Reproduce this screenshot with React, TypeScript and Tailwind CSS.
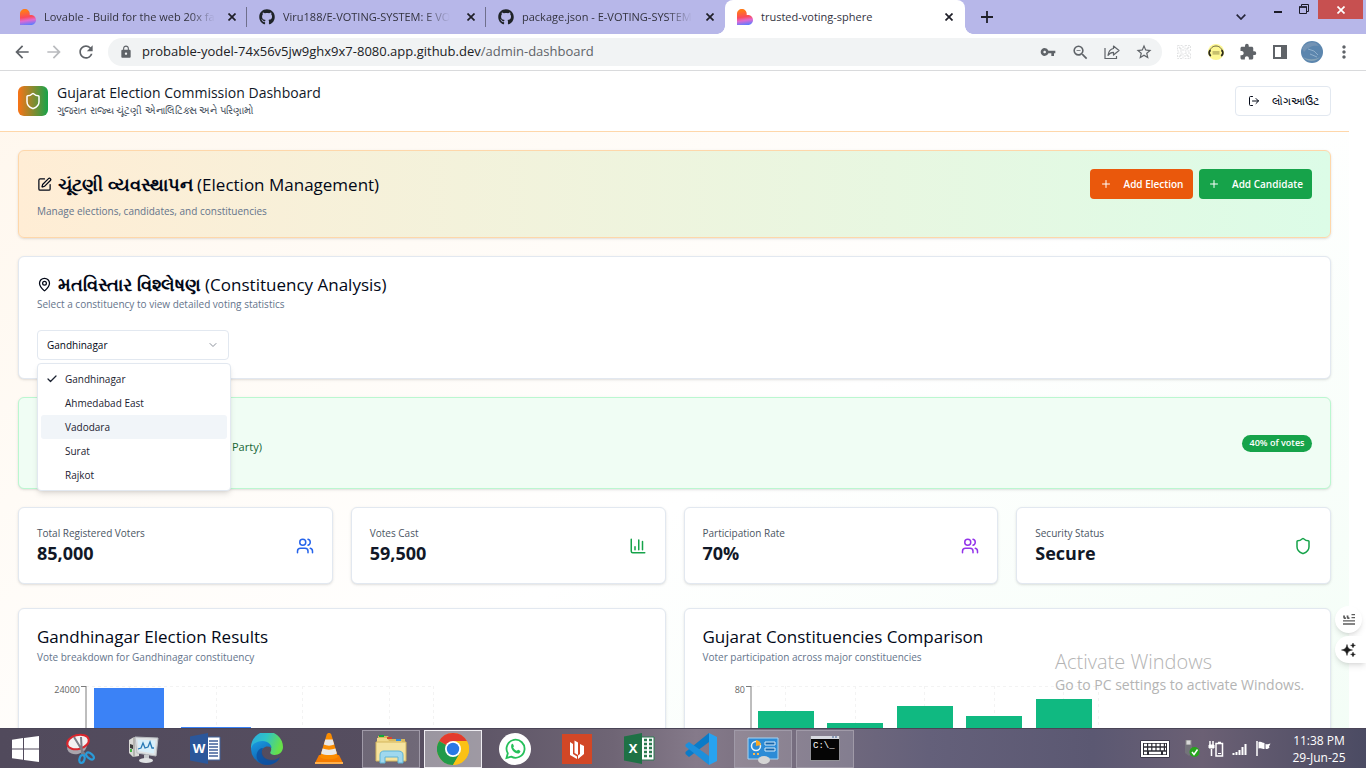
import React from "react";
import { ChevronDown, Check, LogOut, MapPin, Plus, Shield, SquarePen, Users } from "lucide-react";
import { FaGithub } from "react-icons/fa";
import {
  MdArrowBack,
  MdArrowForward,
  MdExtension,
  MdLock,
  MdMoreVert,
  MdRefresh,
  MdStarBorder,
  MdVpnKey,
  MdZoomOut,
} from "react-icons/md";

/* ---------- browser chrome ---------- */

function LovableIcon() {
  return (
    <svg width="16" height="16" viewBox="0 0 16 16" className="shrink-0">
      <defs>
        <linearGradient id="lov" x1="0.35" y1="0" x2="0.5" y2="1">
          <stop offset="0.1" stopColor="#ff7a1a" />
          <stop offset="0.5" stopColor="#fb4a5a" />
          <stop offset="0.72" stopColor="#e06ad0" />
          <stop offset="1" stopColor="#5f7cff" />
        </linearGradient>
      </defs>
      <path
        d="M4.900 0C7.600 0 9.700 2.100 9.700 4.800v1.300h1.400c2.700 0 4.900 2.200 4.900 4.900S13.800 16 11.100 16H0V4.800C0 2.100 2.200 0 4.900 0z"
        fill="url(#lov)"
      />
    </svg>
  );
}

function CloseGlyph() {
  return (
    <svg width="8" height="8" viewBox="0 0 8 8" className="block">
      <path d="M0.500 0.500L7.500 7.500M7.500 0.500L0.500 7.500" stroke="currentColor" strokeWidth="1.700" />
    </svg>
  );
}

function Tab({ icon, title, divider }: { icon: React.ReactNode; title: string; divider?: boolean }) {
  return (
    <div className="relative flex h-[34px] w-[239px] items-center pl-3 pr-[7px] text-[#33333f]">
      {icon}
      <span className="ml-2 whitespace-nowrap text-[11px] [mask-image:linear-gradient(to_right,#000_85%,transparent)]">
        {title}
      </span>
      <button aria-label={`Close ${title}`} className="ml-auto flex size-4 items-center justify-center text-[#1f1f28]">
        <CloseGlyph />
      </button>
      {divider && <span className="absolute right-0 top-[7px] h-5 w-px bg-[#6f6f8c]" />}
    </div>
  );
}

function TabStrip() {
  return (
    <div className="flex h-[34px] shrink-0 items-start bg-[#b7b7e9] pl-2">
      <Tab icon={<LovableIcon />} title="Lovable - Build for the web 20x fa" divider />
      <Tab icon={<FaGithub size={16} className="shrink-0 text-[#1f2328]" />} title="Viru188/E-VOTING-SYSTEM: E VO" divider />
      <Tab icon={<FaGithub size={16} className="shrink-0 text-[#1f2328]" />} title="package.json - E-VOTING-SYSTEM" />
      <div className="relative flex h-[34px] w-[240px] items-center rounded-t-lg bg-white pl-3 pr-2 text-[#33333f]">
        <span className="absolute -left-2 bottom-0 size-2 bg-[radial-gradient(circle_at_0_0,transparent_7.500px,#fff_8px)]" />
        <span className="absolute -right-2 bottom-0 size-2 bg-[radial-gradient(circle_at_100%_0,transparent_7.500px,#fff_8px)]" />
        <LovableIcon />
        <span className="ml-2 whitespace-nowrap text-[11px]">trusted-voting-sphere</span>
        <button aria-label="Close tab" className="ml-auto flex size-4 items-center justify-center text-[#1f1f28]">
          <CloseGlyph />
        </button>
      </div>
      <button aria-label="New tab" className="ml-4 mt-[11px] flex size-3 items-center justify-center">
        <svg width="12" height="12" viewBox="0 0 12 12">
          <path d="M6 0v12M0 6h12" stroke="#1f1f28" strokeWidth="1.800" />
        </svg>
      </button>
      <div className="ml-auto flex items-start pr-[3px]">
        <button aria-label="Search tabs" className="mr-7 mt-[14px]">
          <svg width="10" height="6" viewBox="0 0 10 6" className="block">
            <path d="M0.700 0.700L5 5l4.300-4.300" fill="none" stroke="#26263a" strokeWidth="1.700" />
          </svg>
        </button>
        <button aria-label="Minimize" className="mr-[17px] mt-[11px] h-[2px] w-2 bg-[#1b1b28]" />
        <button aria-label="Restore" className="mr-[9px] mt-1">
          <svg width="10" height="10" viewBox="0 0 10 10" className="block" fill="none" stroke="#1b1b28">
            <path d="M2.500 2V0.500h7v7H8" />
            <path d="M0.500 3h7v6.500h-7z" />
            <path d="M0 3h8" strokeWidth="1.500" />
          </svg>
        </button>
        <button aria-label="Close window" className="flex h-[19px] w-[45px] items-center justify-center bg-[#c75050] text-white">
          <CloseGlyph />
        </button>
      </div>
    </div>
  );
}

const toolSlot = "flex w-4 items-center justify-center";

function Toolbar() {
  return (
    <div className="flex h-[37px] shrink-0 items-center border-b border-[#d9dadc] bg-white pl-3 pr-[14px] text-[#5f6368]">
      <button aria-label="Back" className="mr-3"><MdArrowBack size={20} /></button>
      <button aria-label="Forward" className="mr-3 text-[#b9bbbe]"><MdArrowForward size={20} /></button>
      <button aria-label="Reload" className="mr-3"><MdRefresh size={20} /></button>
      <div className="flex h-7 flex-1 items-center rounded-full bg-[#f1f3f4] pl-[11px] pr-[10px]">
        <MdLock size={14} className="shrink-0" />
        <span className="ml-[9px] flex-1 whitespace-nowrap text-[13px] text-[#5f6368]">
          <span className="text-[#202124]">probable-yodel-74x56v5jw9ghx9x7-8080.app.github.dev</span>/admin-dashboard
        </span>
        <span className="flex items-center gap-4">
          <button aria-label="Passwords" className={toolSlot}><MdVpnKey size={16} className="shrink-0" /></button>
          <button aria-label="Zoom" className={toolSlot}><MdZoomOut size={19} className="shrink-0" /></button>
          <button aria-label="Share" className={toolSlot}>
            <svg width="16" height="16" viewBox="0 0 16 16" fill="none" stroke="#5f6368" strokeWidth="1.200">
              <path d="M1 4v10.500h11.500V12" />
              <path d="M9.500 2l5.500 4.500-5.500 4.500V8.400C7 8.400 5.400 9.300 4 11.300 4.500 7.500 6.500 5 9.500 4.500z" strokeLinejoin="round" />
            </svg>
          </button>
          <button aria-label="Bookmark" className={toolSlot}><MdStarBorder size={18} className="shrink-0" /></button>
        </span>
      </div>
      <div className="ml-[14px] flex items-center gap-4">
        <span className={toolSlot}>
          <svg width="14" height="14" viewBox="0 0 14 14" fill="none" stroke="#e2e3e4" className="shrink-0">
            <path d="M0.500 0.500h5.500v5.500h-5.500zM8 0.500h5.500v5.500H8zM0.500 8h5.500v5.500h-5.500zM8 8h5.500v5.500H8z" strokeDasharray="2 1" />
            <path d="M2 2l2.500 2.500M12 2L9.500 4.500M2 12l2.500-2.500M12 12L9.500 9.500" strokeWidth="1.500" />
          </svg>
        </span>
        <span className={toolSlot}>
          <svg width="16" height="16" viewBox="0 0 16 16" className="shrink-0">
            <circle cx="8" cy="8" r="8" fill="#fdf793" />
            <path d="M2 8c0-8 12-8 12 0" fill="none" stroke="#6b6540" strokeWidth="1" />
            <path d="M2.200 6C.8 8 1 10.500 2.800 12M13.800 6c1.400 2 1.200 4.500-.6 6" stroke="#2c2a1a" strokeWidth="1.700" fill="none" />
            <path d="M4.500 8h7M4.500 9.800h7" stroke="#b5ae62" strokeWidth="1.300" />
          </svg>
        </span>
        <span className={toolSlot}><MdExtension size={18} className="shrink-0" /></span>
        <span className={toolSlot}>
          <svg width="14" height="14" viewBox="0 0 14 14" className="shrink-0">
            <path d="M0 0h14v14H0zM2 2v10h6V2z" fill="#5f6368" fillRule="evenodd" />
          </svg>
        </span>
        <span className={toolSlot}>
          <svg width="22" height="22" viewBox="0 0 22 22" className="shrink-0">
            <circle cx="11" cy="11" r="11" fill="#5c86ae" />
            <path d="M1 7c4-5 9-7 14-5l3 3c-5-1-10 0-15 6z" fill="#7393b4" />
            <path d="M7 8l6 2 4 4M9 13l7 3" stroke="#9dbad3" strokeWidth="0.800" fill="none" />
            <path d="M2 16c5 3 12 3 17 0a11 11 0 0 1-17 0z" fill="#86a4b8" />
          </svg>
        </span>
        <button aria-label="Menu" className={toolSlot}><MdMoreVert size={20} className="shrink-0" /></button>
      </div>
    </div>
  );
}

/* ---------- dashboard ---------- */

const card = "rounded-md border border-[#e2e8f0] bg-white shadow-sm";

function BarsIcon() {
  return (
    <svg width="18" height="18" viewBox="0 0 24 24" fill="none" stroke="#16a34a" strokeWidth="2" strokeLinecap="round" strokeLinejoin="round">
      <path d="M3 3v16a2 2 0 0 0 2 2h16" />
      <path d="M18 17V6M13 17V4M8 17v-4" />
    </svg>
  );
}

const stats = [
  { label: "Total Registered Voters", value: "85,000", icon: <Users size={18} className="text-[#2563eb]" /> },
  { label: "Votes Cast", value: "59,500", icon: <BarsIcon /> },
  { label: "Participation Rate", value: "70%", icon: <Users size={18} className="text-[#9333ea]" /> },
  { label: "Security Status", value: "Secure", icon: <Shield size={18} className="text-[#16a34a]" /> },
];

const options = ["Gandhinagar", "Ahmedabad East", "Vadodara", "Surat", "Rajkot"];

function ConstituencySelect() {
  return (
    <div className="relative w-[192px]">
      <select
        aria-label="Constituency"
        defaultValue="Gandhinagar"
        className="block h-[30px] w-full appearance-none rounded-[4px] border border-[#e2e8f0] bg-white pl-[9px] text-[10px] text-[#020817]"
      >
        {options.map((o) => (
          <option key={o}>{o}</option>
        ))}
      </select>
      <ChevronDown size={12} className="absolute right-[10px] top-[9px] text-[#8b919b]" />
      <ul
        role="listbox"
        aria-label="Constituencies"
        className="absolute left-0 top-[33px] z-10 w-[194px] rounded-[4px] border border-[#e2e8f0] bg-white p-[3px] text-[10px] text-[#1b2230] shadow-md"
      >
        {options.map((o) => (
          <li
            key={o}
            role="option"
            aria-selected={o === "Gandhinagar"}
            className={
              o === "Vadodara"
                ? "flex h-6 items-center rounded-[3px] bg-[#f1f5f9] pl-6"
                : "flex h-6 items-center rounded-[3px] pl-6"
            }
          >
            {o === "Gandhinagar" && <Check size={12} strokeWidth={2.5} className="-ml-[19px] mr-[7px]" />}
            {o}
          </li>
        ))}
      </ul>
    </div>
  );
}

type Bar = { x: number; y: number; w: number };

function BarChart(props: { label: string; axisX: number; end: number; lines: number[]; bars: Bar[]; fill: string; name: string }) {
  const { label, axisX, end, lines, bars, fill, name } = props;
  return (
    <svg width="420" height="225" viewBox="0 0 420 225" role="img" aria-label={name} className="block">
      <g stroke="#f3f3f3" strokeDasharray="3 3">
        <path d={`M${axisX} 4.500H${end}`} />
        {lines.map((x) => (
          <path key={x} d={`M${x}.5 4V200`} />
        ))}
      </g>
      <path d={`M${axisX - 5} 4.500H${axisX}M${axisX} 4V200`} stroke="#7c7c7c" fill="none" />
      {bars.map((b) => (
        <rect key={b.x} x={b.x} y={b.y} width={b.w} height={200 - b.y} fill={fill} />
      ))}
      <text x={axisX - 6} y="11" textAnchor="end" fontSize="9" fill="#666666">
        {label}
      </text>
    </svg>
  );
}

function Dashboard() {
  return (
    <div className="bg-linear-to-br/srgb from-[#fff7ed] via-white to-[#f0fdf4] pb-[18px]">
      <header className="flex h-[61px] items-center justify-between border-b border-[#fed7aa] bg-white px-[18px]">
        <div className="flex items-center gap-[9px]">
          <div className="flex size-[30px] items-center justify-center rounded-md bg-linear-to-r/srgb from-[#f97316] to-[#16a34a]">
            <Shield size={18} className="text-white" />
          </div>
          <div className="whitespace-nowrap">
            <h1 className="text-[14px] font-medium leading-[18px] text-[#111827]">Gujarat Election Commission Dashboard</h1>
            <p className="text-[10px] leading-4 text-[#4b5563]">ગુજરાત રાજ્ય ચૂંટણી એનાલિટિક્સ અને પરિણામો</p>
          </div>
        </div>
        <button className="flex h-[30px] w-24 items-center justify-center gap-3 rounded-[4px] border border-[#e2e8f0] bg-white text-[11px] text-[#020817]">
          <LogOut size={12} />
          લોગઆઉટ
        </button>
      </header>

      <main className="flex flex-col gap-[18px] p-[18px]">
        <section className="flex h-[88px] items-start justify-between rounded-md border border-[#fed7aa] bg-linear-to-r/srgb from-[#ffedd5] to-[#dcfce7] p-[18px] shadow-sm">
          <div className="whitespace-nowrap">
            <h2 className="flex h-[30px] items-center gap-[6px] text-[17px] font-medium text-[#020817]">
              <SquarePen size={15} />
              <span>
                <span className="text-[18px] font-semibold">ચૂંટણી વ્યવસ્થાપન</span> (Election Management)
              </span>
            </h2>
            <p className="mt-1 text-[10px] leading-4 text-[#64748b]">Manage elections, candidates, and constituencies</p>
          </div>
          <div className="flex gap-[6px] text-[10px] font-semibold text-white">
            <button className="flex h-[30px] w-[103px] items-center justify-center gap-3 whitespace-nowrap rounded-[4px] bg-[#ea580c]">
              <Plus size={12} />
              Add Election
            </button>
            <button className="flex h-[30px] w-[113px] items-center justify-center gap-3 whitespace-nowrap rounded-[4px] bg-[#16a34a]">
              <Plus size={12} />
              Add Candidate
            </button>
          </div>
        </section>

        <section className={`${card} h-[123px] px-[18px] pt-[15px]`}>
          <h2 className="flex h-6 items-center gap-[6px] whitespace-nowrap text-[17px] font-medium text-[#020817]">
            <MapPin size={15} />
            <span>
              <span className="text-[18px] font-semibold">મતવિસ્તાર વિશ્લેષણ</span> (Constituency Analysis)
            </span>
          </h2>
          <p className="mb-[18px] text-[10px] leading-4 text-[#64748b]">Select a constituency to view detailed voting statistics</p>
          <ConstituencySelect />
        </section>

        <section className="flex h-[92px] items-center justify-between rounded-md border border-[#bbf7d0] bg-[#f0fdf4] px-[18px] shadow-sm">
          <p className="pl-[195px] pt-2 text-[11px] text-[#166534]">Party)</p>
          <span className="flex h-[17px] w-[70px] items-center justify-center whitespace-nowrap rounded-full bg-[#16a34a] text-[9px] font-semibold text-white">
            40% of votes
          </span>
        </section>

        <section className="grid grid-cols-4 gap-[18px]">
          {stats.map((s) => (
            <div key={s.label} className={`${card} flex h-[77px] items-center justify-between px-[18px]`}>
              <div className="pb-[2px]">
                <p className="text-[10px] leading-4 text-[#4b5563]">{s.label}</p>
                <p className="text-[18px] font-bold leading-6 text-[#111827]">{s.value}</p>
              </div>
              {s.icon}
            </div>
          ))}
        </section>

        <section className="mt-[6px] grid grid-cols-2 gap-[18px]">
          <div className={`${card} px-[18px] pt-4`}>
            <h3 className="text-[17px] font-medium leading-6 text-[#020817]">Gandhinagar Election Results</h3>
            <p className="mb-[17px] text-[10px] leading-4 text-[#64748b]">Vote breakdown for Gandhinagar constituency</p>
            <BarChart
              name="Gandhinagar election results"
              label="24000"
              axisX={49}
              end={396}
              lines={[92, 179, 265, 352, 396]}
              bars={[
                { x: 57, y: 6, w: 70 },
                { x: 144, y: 45, w: 70 },
              ]}
              fill="#3b82f6"
            />
          </div>
          <div className={`${card} px-[18px] pt-4`}>
            <h3 className="text-[17px] font-medium leading-6 text-[#020817]">Gujarat Constituencies Comparison</h3>
            <p className="mb-[17px] text-[10px] leading-4 text-[#64748b]">Voter participation across major constituencies</p>
            <BarChart
              name="Voter participation by constituency"
              label="80"
              axisX={48}
              end={395}
              lines={[82, 152, 221, 291, 360, 395]}
              bars={[
                { x: 55, y: 29, w: 56 },
                { x: 124, y: 41, w: 56 },
                { x: 194, y: 24, w: 56 },
                { x: 263, y: 34, w: 56 },
                { x: 333, y: 17, w: 56 },
              ]}
              fill="#10b981"
            />
          </div>
        </section>
      </main>
    </div>
  );
}

/* ---------- desktop ---------- */

function WindowsIcon() {
  return (
    <svg width="27" height="26" viewBox="0 0 27 26" fill="#ffffff">
      <path d="M0 3.700L11 2.100V12.400H0zM12 2L27 0v12.400H12zM0 13.400h11v10.400L0 22.200zM12 13.400h15V26l-15-2.100z" />
    </svg>
  );
}

function SnipIcon() {
  return (
    <svg width="32" height="32" viewBox="0 0 32 32">
      <ellipse cx="12" cy="14" rx="10" ry="7" fill="#a9a5ad" transform="rotate(-15 12 14)" />
      <ellipse cx="13" cy="9" rx="11" ry="7" fill="#f4f1f2" stroke="#d9272e" strokeWidth="2" transform="rotate(-15 13 9)" />
      <path d="M9 4l11 18M16 4l1 17" stroke="#7c7c86" strokeWidth="2" />
      <g fill="none" stroke="#2a9bd8" strokeWidth="2.200">
        <ellipse cx="17" cy="26" rx="2.500" ry="4" transform="rotate(15 17 26)" />
        <ellipse cx="25" cy="23" rx="2.500" ry="4.500" transform="rotate(-50 25 23)" />
      </g>
    </svg>
  );
}

function MonitorIcon() {
  return (
    <svg width="32" height="32" viewBox="0 0 32 32">
      <path d="M2 7l5-3 5 1v18l-6 1-4-4z" fill="#d9d9d6" />
      <path d="M7 4v20" stroke="#8c8c88" />
      <path d="M3 11l3 1v4l-3-1z" fill="#3a3a3a" />
      <path d="M3 16h2v3H3z" fill="#45b545" />
      <path d="M8 4l23 1-2 18-19-3z" fill="#dfe2e4" stroke="#b8bcc0" />
      <path d="M10.500 6.500l18 1-1.500 13-15-2.500z" fill="#d8effa" />
      <path d="M11 16l3-1 2-5 2 5 3-1 2-5 2 6 2 0" fill="none" stroke="#2779b5" strokeWidth="1.300" />
      <path d="M17 22h5v4h-5z" fill="#c6c9cc" />
      <ellipse cx="19" cy="27.500" rx="7" ry="2.500" fill="#dfe1e3" />
    </svg>
  );
}

function OfficeIcon({ letter, dark, light }: { letter: string; dark: string; light: string }) {
  return (
    <svg width="31" height="31" viewBox="0 0 31 31">
      <path d="M16 4h14v23H16z" fill="#ffffff" stroke={light} />
      {letter === "W" ? (
        <path d="M19 8h9M19 11h9M19 14h9M19 17h9M19 20h9M19 23h9" stroke={light} strokeWidth="1.400" />
      ) : (
        <path d="M20 7h3M25 7h3M20 11h3M25 11h3M20 15h3M25 15h3M20 19h3M25 19h3M20 23h3M25 23h3" stroke={light} strokeWidth="2.400" />
      )}
      <path d="M0 3.500L18 0v31L0 27.500z" fill={dark} />
      <text x="9" y="20" textAnchor="middle" fontSize="13" fontWeight="700" fill="#ffffff">
        {letter}
      </text>
    </svg>
  );
}

function EdgeIcon() {
  return (
    <svg width="32" height="32" viewBox="0 0 32 32">
      <defs>
        <linearGradient id="edgeTop" x1="0" y1="0" x2="1" y2="0.300">
          <stop offset="0" stopColor="#2aa8e0" />
          <stop offset="0.500" stopColor="#2fc3c8" />
          <stop offset="1" stopColor="#66e04a" />
        </linearGradient>
        <linearGradient id="edgeBody" x1="0" y1="0" x2="0.600" y2="1">
          <stop offset="0" stopColor="#1b9de2" />
          <stop offset="1" stopColor="#0c55a8" />
        </linearGradient>
      </defs>
      <path d="M0 15A16 16 0 0 1 32 14c0 5-4 8-8.500 8-3 0-5-1.500-4-3 1.500-2.500 1-8-5-8.500C8 10 2 12 0 17z" fill="url(#edgeTop)" />
      <path d="M0 15.500C1 11 6 8 11.500 8c6 0 9 4 9 7-4-3-10-1-10 5 0 5 5 9 11 8.500 3-.3 5-1.500 7.500-3.500A16 16 0 0 1 0 15.500z" fill="url(#edgeBody)" />
      <path d="M12 15c-3 5 0 12 9 12 4 0 6-2 8-3-2 5-7 8-13 8-7 0-12-6-10-12 1-3 3-5 6-5z" fill="#0f4f9e" opacity="0.800" />
    </svg>
  );
}

function VlcIcon() {
  return (
    <svg width="28" height="31" viewBox="0 0 28 31">
      <path d="M4 22h20l4 8H0z" fill="#f57c00" />
      <path d="M14 0c1 0 2 .5 2.300 1.500L23 24c-3 3-15 3-18 0L11.700 1.500C12 .5 13 0 14 0z" fill="#fb8c00" />
      <path d="M10.300 6.500h7.400l1.500 5c-3 1.500-7.400 1.500-10.400 0z" fill="#e9e9e9" />
      <path d="M7.600 15.500c4 1.500 8.800 1.500 12.800 0l1.500 5c-4 2-11.800 2-15.800 0z" fill="#e9e9e9" />
      <path d="M0 29h28v2H0z" fill="#ffb04d" />
    </svg>
  );
}

function ExplorerIcon() {
  return (
    <svg width="34" height="32" viewBox="0 0 34 32">
      <path d="M4 3h10l2 3h15v19H4z" fill="#d9b95c" />
      <path d="M3 5h10l2 3h13v19H3z" fill="#f0d98a" />
      <path d="M2 9h28l2 0v19H2z" fill="#f5e39f" stroke="#d4b65c" />
      <path d="M5 2h5v2H5z" fill="#14a83b" />
      <path d="M13 4h5v2h-5z" fill="#d8432f" />
      <path d="M22 6h5v2h-5z" fill="#2d8be0" />
      <path d="M6 30V22c0-3 2-4 4-4h14c3 0 5 1 5 4v8h-5v-6H11v6z" fill="#9fd8ee" stroke="#5fb4d6" />
    </svg>
  );
}

function ChromeIcon() {
  return (
    <svg width="32" height="32" viewBox="0 0 32 32">
      <circle cx="16" cy="16" r="16" fill="#fbc116" />
      <path d="M16 16L2.140 8A16 16 0 0 1 29.860 8z" fill="#e33b2e" />
      <path d="M2.140 8A16 16 0 0 0 16 32l7-12-7-4z" fill="#229a4a" />
      <path d="M29.860 8H16v8l7 4-7 12A16 16 0 0 0 29.860 8z" fill="#fbc116" />
      <circle cx="16" cy="16" r="8" fill="#ffffff" />
      <circle cx="16" cy="16" r="6.200" fill="#2a78e4" />
    </svg>
  );
}

function WhatsAppIcon() {
  return (
    <svg width="32" height="32" viewBox="0 0 32 32">
      <circle cx="16" cy="16" r="16" fill="#ffffff" />
      <path d="M7.500 25l1.300-4.700a9 9 0 1 1 3.400 3.300z" fill="none" stroke="#25c05a" strokeWidth="1.800" />
      <path d="M12.600 11.200c.6-.6 1.300-.5 1.600.2l.7 1.600c.2.5-.7 1.200-.7 1.600.8 1.600 2 2.600 3.500 3.200.5.1 1.100-1.200 1.600-1l1.800.9c.7.4.2 2.200-1.300 2.700-3.500.9-9.500-4.800-7.200-9.200z" fill="#25c05a" />
    </svg>
  );
}

function RedBookIcon() {
  return (
    <svg width="30" height="30" viewBox="0 0 30 30">
      <path d="M0 0h30v30H0z" fill="#d24726" />
      <path d="M8 8l3 2v10l4 2.500V25l-7-4z" fill="#ffffff" />
      <path d="M12.500 6.500l3.500 2v12.500l-3.500-2z" fill="#ffffff" />
      <path d="M18 10l4 2v8l-6 5v-3.500l2-1.500z" fill="#ffffff" />
    </svg>
  );
}

function VsCodeIcon() {
  return (
    <svg width="32" height="32" viewBox="0 0 32 32">
      <path d="M24 0v9L4 24l-3.500-3v-2z" fill="#0a7bc8" />
      <path d="M24 32v-9L4 9 .5 11.500v2z" fill="#1c8fdc" />
      <path d="M24 0l8 4v24l-8 4z" fill="#27a3f0" />
    </svg>
  );
}

function ControlPanelIcon() {
  return (
    <svg width="32" height="32" viewBox="0 0 32 32">
      <path d="M1 5h30v21H1z" fill="#2c8bd6" stroke="#a7d4f2" />
      <circle cx="9" cy="13" r="4.500" fill="none" stroke="#e6f3fc" strokeWidth="1.500" />
      <path d="M9 13V7a6 6 0 0 1 5 5z" fill="#f9a825" />
      <path d="M18 9h10v3H18zM18 15h10v3H18z" fill="#1765aa" stroke="#d5ecfb" />
      <path d="M6 21h2M10 21h2" stroke="#ffb74d" strokeWidth="2" />
      <ellipse cx="17" cy="27" rx="6" ry="4" fill="#d5d5d5" />
    </svg>
  );
}

function TerminalIcon() {
  return (
    <svg width="30" height="26" viewBox="0 0 30 26">
      <path d="M0 0h30v25H0z" fill="#8f8f95" />
      <path d="M1 0h28v3H1z" fill="#d7dae0" />
      <path d="M22 1h2M25 1h2" stroke="#41618f" />
      <path d="M1 3h28v21H1z" fill="#050505" />
      <text x="3" y="12" fontSize="9" fill="#ffffff" fontFamily="Liberation Mono, monospace">
        C:\_
      </text>
    </svg>
  );
}

const apps: { name: string; icon: React.ReactNode; state: "idle" | "open" | "active" }[] = [
  { name: "Snipping Tool", icon: <SnipIcon />, state: "idle" },
  { name: "System Monitor", icon: <MonitorIcon />, state: "idle" },
  { name: "Word", icon: <OfficeIcon letter="W" dark="#2b579a" light="#41629b" />, state: "idle" },
  { name: "Edge", icon: <EdgeIcon />, state: "idle" },
  { name: "VLC", icon: <VlcIcon />, state: "idle" },
  { name: "File Explorer", icon: <ExplorerIcon />, state: "open" },
  { name: "Chrome", icon: <ChromeIcon />, state: "active" },
  { name: "WhatsApp", icon: <WhatsAppIcon />, state: "idle" },
  { name: "Reader", icon: <RedBookIcon />, state: "idle" },
  { name: "Excel", icon: <OfficeIcon letter="X" dark="#1e7145" light="#2a7a50" />, state: "idle" },
  { name: "VS Code", icon: <VsCodeIcon />, state: "idle" },
  { name: "Control Panel", icon: <ControlPanelIcon />, state: "open" },
  { name: "Command Prompt", icon: <TerminalIcon />, state: "open" },
];

const stateClass = {
  idle: "border-transparent",
  open: "border-[#a09aa8] bg-white/15",
  active: "border-[#efedf2] bg-white/40",
};

function Taskbar() {
  return (
    <footer className="flex h-10 shrink-0 items-center border-t border-[#4a4557] bg-[linear-gradient(to_right,#514a5c_0%,#564e60_30%,#6f6575_45%,#857a8a_51%,#7a7080_56%,#64607a_68%,#5b5872_80%,#6b6074_88%,#4b4b63_100%)]">
      <button aria-label="Start" className="flex w-[50px] justify-center">
        <WindowsIcon />
      </button>
      <div className="ml-[2px] flex gap-1">
        {apps.map((a) => (
          <button key={a.name} aria-label={a.name} className={`flex h-[38px] w-[58px] items-center justify-center border ${stateClass[a.state]}`}>
            {a.icon}
          </button>
        ))}
      </div>
      <div className="ml-auto flex items-center">
        <svg width="30" height="18" viewBox="0 0 30 18" className="mr-[14px]">
          <path d="M0.500 0.500h29v17h-29z" fill="#ffffff" stroke="#3c394a" />
          <path d="M3 3h24v12H3z" fill="#2c2c34" />
          <path d="M4 5h22M4 9h22" stroke="#ffffff" strokeWidth="2.400" strokeDasharray="3 1.200" />
          <path d="M4 13h3M9 13h12M23 13h3" stroke="#ffffff" strokeWidth="2.400" />
        </svg>
        <svg width="16" height="18" viewBox="0 0 16 18" className="mr-[8px]">
          <path d="M2 0h5v5H2z" fill="#d8d8d8" stroke="#8a8a8a" />
          <path d="M1 5h7v8l-3 3-4-3z" fill="#73737a" />
          <circle cx="10.500" cy="12" r="5" fill="#27a51c" />
          <path d="M8 12l2 2.500 3.500-5" fill="none" stroke="#ffffff" strokeWidth="1.500" />
        </svg>
        <svg width="16" height="16" viewBox="0 0 16 16" fill="none" stroke="#ffffff" className="mr-[8px]">
          <path d="M2 0v4M5 0v4M3.500 8v7" strokeWidth="1.500" />
          <path d="M1 4h5v3H1z" fill="#ffffff" />
          <path d="M8 2.500h6.500V15H8zM10 1.500h3" strokeWidth="1.500" />
          <path d="M10 12.500h3" />
        </svg>
        <svg width="16" height="12" viewBox="0 0 16 12" className="mr-[8px]">
          <path d="M1.500 12v-2M4.500 12V9M7.500 12V7M10.500 12V4M13.500 12V1" stroke="#ffffff" strokeWidth="2" />
        </svg>
        <svg width="16" height="15" viewBox="0 0 16 15" className="mr-[16px]">
          <path d="M1 0v15" stroke="#ffffff" strokeWidth="1.500" />
          <path d="M2.500 1c3-1 4 1 6 1v6c-2 0-3-1.500-6-.5zM9.500 3c2 .8 3 0 5-.5l-1.500 3 .5 1c-1.500 1.500-3 2-4 1z" fill="#ffffff" />
        </svg>
        <div className="mr-4 w-[62px] whitespace-nowrap text-center text-[12px] leading-[17px] text-white">
          <p>11:38 PM</p>
          <p>29-Jun-25</p>
        </div>
      </div>
    </footer>
  );
}

export default function App() {
  return (
    <div className="flex h-screen flex-col overflow-hidden bg-white font-['Open_Sans','Noto_Sans',sans-serif]">
      <TabStrip />
      <Toolbar />
      <div className="relative min-h-0 flex-1 overflow-hidden pr-[17px]">
        <Dashboard />
        <button aria-label="Quote" className="absolute bottom-[95px] right-1 flex size-[27px] items-center justify-center rounded-full bg-white shadow-md">
          <svg width="12" height="11" viewBox="0 0 12 11" stroke="#5c5c5c">
            <path d="M1 1.500c0 2 0 3 2 2.500M4.500 1.500c0 2 0 3 2 2.500" strokeWidth="1.800" fill="none" />
            <path d="M8.500 0.700H12M8.500 3.700H12M0 6.800h12M0 10h12" strokeWidth="1.300" />
          </svg>
        </button>
        <button aria-label="Assistant" className="absolute bottom-[65px] right-0 flex h-[27px] w-[31px] items-center rounded-l-full bg-white pl-[6px] shadow-md">
          <svg width="15" height="14" viewBox="0 0 15 14" fill="#1c1c1c">
            <path d="M6 1.500c.8 3.800 1.700 4.700 5.500 5.500-3.800.8-4.700 1.700-5.500 5.500C5.200 8.700 4.300 7.800.5 7 4.300 6.200 5.200 5.300 6 1.500zM12 0c.4 1.700.9 2.100 2.400 2.400-1.500.4-2 .8-2.400 2.400-.4-1.600-.9-2-2.400-2.400C11.100 2.100 11.600 1.700 12 0zM12 9c.4 1.700.9 2.100 2.400 2.400-1.500.4-2 .8-2.400 2.400-.4-1.600-.9-2-2.400-2.400 1.500-.3 2-.7 2.400-2.400z" stroke="#1c1c1c" strokeWidth="0.500" />
          </svg>
        </button>
        <div className="pointer-events-none absolute bottom-[32px] right-14 w-[255px] whitespace-nowrap text-[#b4b4b4]">
          <p className="text-[20px] font-light leading-6">Activate Windows</p>
          <p className="text-[14px] leading-[22px]">Go to PC settings to activate Windows.</p>
        </div>
      </div>
      <Taskbar />
    </div>
  );
}
